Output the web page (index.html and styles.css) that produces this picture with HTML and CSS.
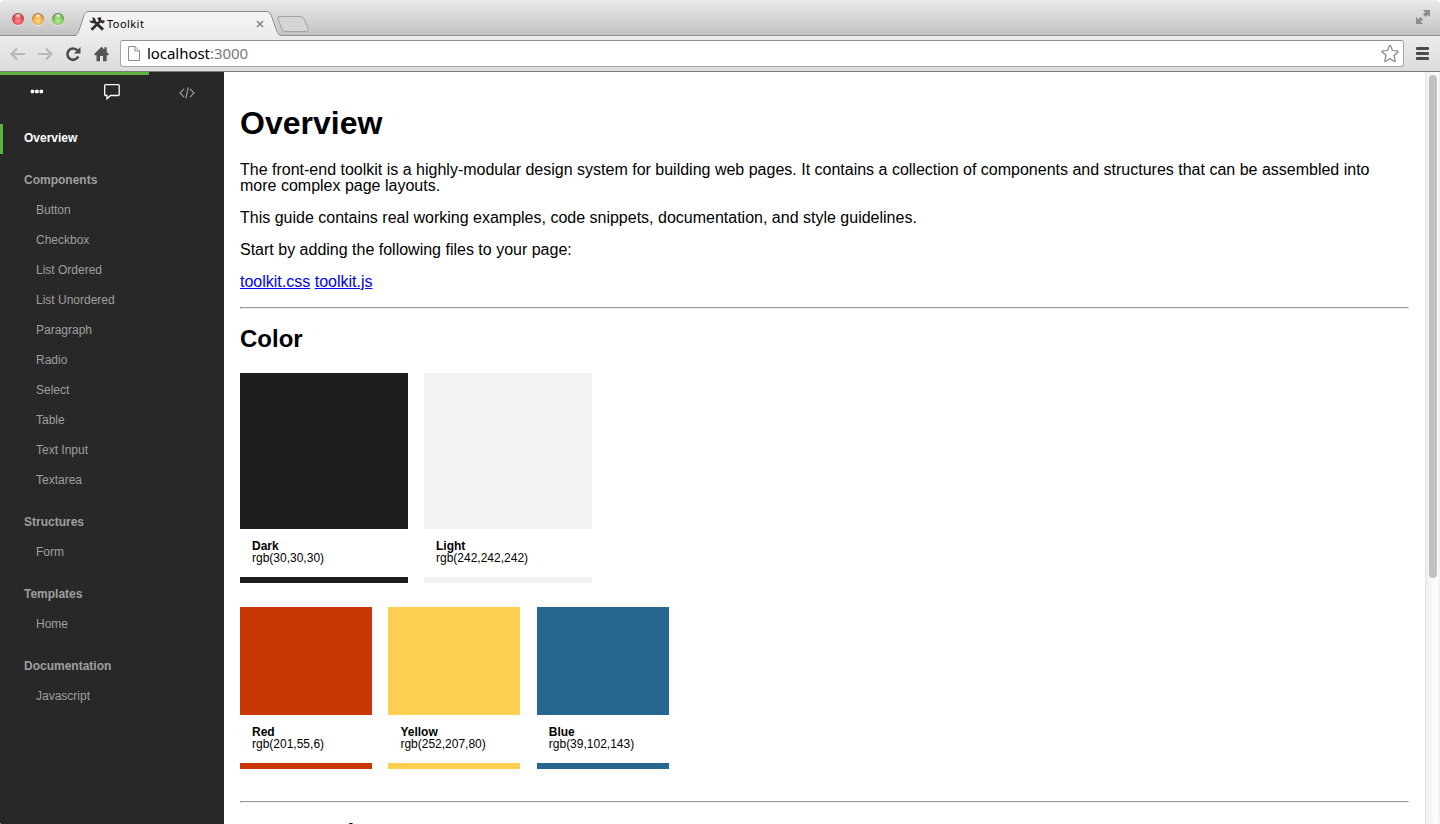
FILE: index.html
```html
<!DOCTYPE html>
<html lang="en">
<head>
<meta charset="utf-8">
<title>Toolkit</title>
<link rel="stylesheet" href="styles.css">
</head>
<body>
<div class="window">
  <header class="chrome">
    <div class="tabstrip">
      <div class="lights"><i class="light red"></i><i class="light amber"></i><i class="light green"></i></div>
      <div class="tabs">
        <svg class="tab-shape" width="240" height="37" viewBox="0 0 240 37">
          <defs><linearGradient id="tabfill" x1="0" y1="0" x2="0" y2="1"><stop offset="0.3" stop-color="#f3f3f3"/><stop offset="1" stop-color="#ebebeb"/></linearGradient></defs>
          <path d="M0 37V35.500C3 35.500 4 33 5.500 29L9.500 17C10.500 13 12 11.500 15 11.500H192C195 11.500 196.500 13 197.500 16L202 29C203.500 33 204.500 35.500 208 35.500V37Z" fill="url(#tabfill)"/>
          <path d="M0 35.500C3 35.500 4 33 5.500 29L9.500 17C10.500 13 12 11.500 15 11.500H192C195 11.500 196.500 13 197.500 16L202 29C203.500 33 204.500 35.500 208 35.500" fill="none" stroke="#8e8e8e"/>
          <path d="M206 16.500H226Q229 16.500 230 19L234 28Q235 31.500 232 31.500H212Q209 31.500 208 29L204 19Q203 16.500 206 16.500Z" fill="#d5d5d5" stroke="#a3a3a3"/>
        </svg>
        <div class="tab">
          <svg width="17" height="16" viewBox="0 0 17 16" fill="#302c2c">
            <path d="M.300 4.200L2.600 5.200L4 4L3.200 1.200Q6.600 1.500 6.800 5L15 12.500L13 14.700L5.300 7.300Q1.200 7.800 .300 4.200Z"/>
            <path d="M8.200 2.600Q10 .500 12.600 1.600L11.800 2.900L13.500 4.700L14.700 4.100L16 5.500L13.700 7.800L12.300 6.400L11 6.900L3.600 14.700L1.500 12.700L9.800 4.800Z"/>
          </svg>
          <span class="tab-title">Toolkit</span>
          <svg class="tab-close" width="8" height="8" viewBox="0 0 8 8"><path d="M1 1L7 7M7 1L1 7" stroke="#858585" stroke-width="1.500"/></svg>
        </div>
      </div>
      <svg class="expand" width="14" height="14" viewBox="0 0 14 14" fill="#8d8d8d"><path d="M7 0H14V7L11.700 4.700L9.500 7L7 4.500L9.300 2.300ZM0 7L2.300 9.300L4.500 7L7 9.500L4.700 11.700L7 14H0Z"/></svg>
    </div>
    <div class="toolbar">
      <svg class="nav-icon" width="16" height="16" viewBox="0 0 16 16" fill="none" stroke="#b9b9b9" stroke-width="2.200"><path d="M16 8H2.500M8 2.500L2.500 8L8 13.500"/></svg>
      <svg class="nav-icon" width="16" height="16" viewBox="0 0 16 16" fill="none" stroke="#b9b9b9" stroke-width="2.200"><path d="M1 8H14.500M9 2.500L14.500 8L9 13.500"/></svg>
      <svg class="nav-icon reload" width="16" height="16" viewBox="0 0 16 16"><path d="M12.500 4.500A5.700 5.700 0 1 0 13.300 10.500" fill="none" stroke="#4c4c4c" stroke-width="2.600"/><path d="M15.500 1V7.500H9Z" fill="#4c4c4c"/></svg>
      <svg class="nav-icon" width="16" height="16" viewBox="0 0 16 16" fill="#555"><path d="M7.500 .700L10.300 3.500V1.200H12.700V6L15 8.300L14 9.300H12.700V15.300H9V10H6V15.300H2.500V9.300H1L0 8.300Z"/></svg>
      <div class="omnibox">
        <svg width="12" height="15" viewBox="0 0 12 15" fill="#fff" stroke="#8c8c8c"><path d="M.500 .500H7L11.500 5V14.500H.500ZM7 .500V5H11.500"/></svg>
        <span class="url">localhost<span class="port">:3000</span></span>
        <svg class="star" width="20" height="19" viewBox="0 0 20 19"><path d="M9.200 2Q10 .700 10.800 2L12.400 6.500L17.300 6.800Q18.800 7.200 17.600 8.300L13.900 11.500L15.200 16.200Q15.300 17.700 14 17.200L10 14.600L6 17.200Q4.700 17.700 4.800 16.200L6.100 11.500L2.400 8.300Q1.200 7.200 2.700 6.800L7.600 6.500Z" fill="#fff" stroke="#858585" stroke-width="1.200" stroke-linejoin="round"/></svg>
      </div>
      <div class="menu"><i></i><i></i><i></i></div>
    </div>
  </header>
  <div class="page">
    <aside class="sidebar">
      <div class="controls">
        <div class="control on"><svg width="14" height="5" viewBox="0 0 14 5" fill="#fff"><rect x=".700" y=".700" width="3.600" height="3.600" rx="1"/><rect x="5.100" y=".700" width="3.600" height="3.600" rx="1"/><rect x="9.500" y=".700" width="3.600" height="3.600" rx="1"/></svg></div>
        <div class="control on"><svg width="16" height="16" viewBox="0 0 16 16"><path d="M1.500 .700H14.300Q15.200 .700 15.200 1.600V10.600Q15.200 11.500 14.300 11.500H6.500L3 14.800V11.500H1.500Q.700 11.500 .700 10.600V1.600Q.700 .700 1.500 .700Z" fill="none" stroke="#fff" stroke-width="1.300"/></svg></div>
        <div class="control code"><svg width="16" height="12" viewBox="0 0 16 12" fill="none" stroke="#999" stroke-width="1.200"><path d="M5 1.800L1 6L5 10.200M11 1.800L15 6L11 10.200M9.300 .500L6.700 11.500"/></svg></div>
      </div>
      <nav class="nav">
        <a class="group active">Overview</a>
        <a class="group">Components</a>
        <a class="item">Button</a><a class="item">Checkbox</a><a class="item">List Ordered</a><a class="item">List Unordered</a><a class="item">Paragraph</a><a class="item">Radio</a><a class="item">Select</a><a class="item">Table</a><a class="item">Text Input</a><a class="item">Textarea</a>
        <a class="group">Structures</a>
        <a class="item">Form</a>
        <a class="group">Templates</a>
        <a class="item">Home</a>
        <a class="group">Documentation</a>
        <a class="item">Javascript</a>
      </nav>
    </aside>
    <main class="content">
      <h1>Overview</h1>
      <p>The front-end toolkit is a highly-modular design system for building web pages. It contains a collection of components and structures that can be assembled into<br>more complex page layouts.</p>
      <p>This guide contains real working examples, code snippets, documentation, and style guidelines.</p>
      <p>Start by adding the following files to your page:</p>
      <p><a href="#">toolkit.css</a> <a href="#">toolkit.js</a></p>
      <hr>
      <h2>Color</h2>
      <div class="swatches large">
        <div class="swatch dark"><div class="chip"></div><div class="info"><b>Dark</b><span>rgb(30,30,30)</span></div></div>
        <div class="swatch light-grey"><div class="chip"></div><div class="info"><b>Light</b><span>rgb(242,242,242)</span></div></div>
      </div>
      <div class="swatches small">
        <div class="swatch brand-red"><div class="chip"></div><div class="info"><b>Red</b><span>rgb(201,55,6)</span></div></div>
        <div class="swatch brand-yellow"><div class="chip"></div><div class="info"><b>Yellow</b><span>rgb(252,207,80)</span></div></div>
        <div class="swatch brand-blue"><div class="chip"></div><div class="info"><b>Blue</b><span>rgb(39,102,143)</span></div></div>
      </div>
      <hr class="section-rule">
      <h2>Typography</h2>
    </main>
    <div class="scrollbar"><div class="thumb"></div></div>
  </div>
</div>
</body>
</html>
```

FILE: styles.css
```css
* { box-sizing: border-box; }
body { margin: 0; background: #fff; font-family: "Liberation Sans", Arial, sans-serif; }
svg { display: block; flex: none; }
.window { height: 824px; display: flex; flex-direction: column; overflow: hidden; border-radius: 4px 4px 1px 1px; }

.chrome { flex: none; height: 72px; border-bottom: 1px solid #7c7c7c; font-family: "Noto Sans", "Open Sans", sans-serif; }
.tabstrip { height: 36px; display: flex; background: linear-gradient(#ededed, #e5e5e5 4px, #c4c4c4 34px, #bdbdbd); border-bottom: 1px solid #8e8e8e; padding-right: 10px; }
.lights { display: flex; gap: 8px; padding: 13px 0 0 12px; width: 74px; }
.light { width: 12px; height: 12px; border-radius: 50%; box-shadow: 0 1px 0 rgba(255,255,255,.5); }
.red { background: radial-gradient(ellipse 4px 2.5px at 50% 22%, rgba(255,255,255,.9), transparent), radial-gradient(circle at 50% 65%, #ff8f90, #e34b4f 50%, #94282b 80%); }
.amber { background: radial-gradient(ellipse 4px 2.5px at 50% 22%, rgba(255,255,255,.9), transparent), radial-gradient(circle at 50% 65%, #ffdc85, #eda744 50%, #99601c 80%); }
.green { background: radial-gradient(ellipse 4px 2.5px at 50% 22%, rgba(255,255,255,.9), transparent), radial-gradient(circle at 50% 65%, #bdeb96, #7cc25a 50%, #3c7a2a 80%); }
.tabs { display: grid; height: 37px; }
.tab-shape, .tab { grid-area: 1 / 1; }
.tab { display: flex; width: 190px; height: 16px; margin-top: 16px; padding-left: 15px; align-items: center; }
.tab-title { font-size: 11px; line-height: 16px; margin-left: 1px; letter-spacing: .45px; color: #000; }
.tab-close { margin-left: auto; }
.expand { margin: 10px 0 0 auto; }
.toolbar { height: 35px; display: flex; align-items: center; padding: 0 11px 0 9px; background: linear-gradient(#ebebeb, #dcdcdc); }
.nav-icon { margin-right: 12px; }
.reload { margin-right: 13px; }
.omnibox { flex: 1; height: 27px; margin-left: -2px; display: flex; align-items: center; padding: 0 3px 0 7px; background: #fff; border: 1px solid #a7a7a7; border-top-color: #8f8f8f; border-radius: 3px; }
.url { margin-left: 7px; margin-top: -2px; font-size: 15px; line-height: 20px; letter-spacing: -.05px; color: #000; }
.port { color: #777; }
.star { margin-left: auto; }
.menu { width: 13px; margin-left: 12px; display: flex; flex-direction: column; gap: 2px; }
.menu i { height: 3px; border-radius: 1px; background: #4a4a4a; }

.page { flex: 1; display: flex; min-height: 0; }
.sidebar { width: 224px; flex: none; background: #282828; border-radius: 0 0 0 1px; }
.controls { height: 40px; display: grid; grid-template-columns: 74.500px 74.500px 75px; }
.control { border-top: 3px solid transparent; display: flex; justify-content: center; align-items: center; padding-bottom: 3px; }
.control.on { border-color: #5fb142; }
.control:first-child { padding-bottom: 4px; }
.control.code { padding-bottom: 1px; }
.nav { display: flex; flex-direction: column; font-size: 12px; line-height: 28px; color: #9f9f9f; }
.group { height: 30px; font-weight: bold; padding-left: 24px; margin-top: 12px; }
.item { height: 30px; padding-left: 36px; }
.group.active { color: #fff; border-left: 3px solid #5fb142; padding-left: 21px; }

.content { flex: 1; min-width: 0; padding: 14px 16px 0; overflow: hidden; font-size: 16px; line-height: 16px; color: #000; }
h1 { font-size: 32px; line-height: 32px; margin: 21px 0 23px; }
h2 { font-size: 24px; line-height: 24px; margin: 18px 0 22px; }
p { margin: 0 0 16px; white-space: nowrap; }
.content a { color: #0000ee; }
hr { margin: 17px 0 0; height: 2px; border: 1px solid; border-color: #9a9a9a #eee #eee #9a9a9a; }
.swatches { display: flex; gap: 16px; font-size: 12px; line-height: 12px; margin-bottom: 24px; }
.swatch { width: 168px; border-bottom: 6px solid; }
.chip { height: 156px; }
.info { height: 48px; padding: 11px 12px; display: flex; flex-direction: column; color: #000; }
.small { gap: 16.400px; margin-bottom: 32px; }
.small .swatch { width: 132px; }
.small .chip { height: 108px; }
.section-rule { margin-top: 0; }
.section-rule + h2 { margin-top: 18px; }
.dark { border-color: #1e1e1e; } .dark .chip { background: #1e1e1e; }
.light-grey { border-color: #f2f2f2; } .light-grey .chip { background: #f2f2f2; }
.brand-red { border-color: #c93706; } .brand-red .chip { background: #c93706; }
.brand-yellow { border-color: #fccf50; } .brand-yellow .chip { background: #fccf50; }
.brand-blue { border-color: #27668f; } .brand-blue .chip { background: #27668f; }
.scrollbar { width: 15px; flex: none; padding: 3px 0 0 3px; border-left: 1px solid #e4e4e4; border-right: 1px solid #eee; background: linear-gradient(90deg, #f0f0f0, #fcfcfc 70%, #f8f8f8); }
.thumb { width: 8px; height: 503px; border-radius: 4px; background: #c1c1c1; }
```
